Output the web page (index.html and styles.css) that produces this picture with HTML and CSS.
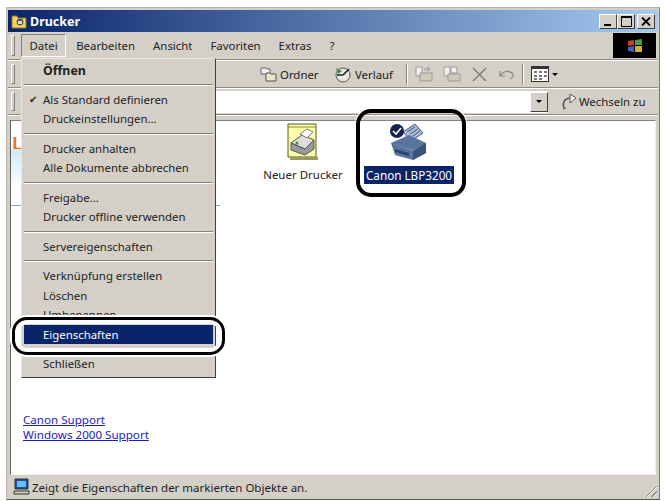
FILE: index.html
```html
<!DOCTYPE html>
<html lang="de">
<head>
  <meta charset="UTF-8" />
  <title>Drucker</title>
  <link rel="stylesheet" href="styles.css">
</head>
<body>

<div class="window">
  <!-- Title bar -->
  <div class="titlebar">
    <svg class="title-icon" width="16" height="16" viewBox="0 0 16 16">
      <path d="M1 3h5l1 2h8v10H1z" fill="#f4d35e" stroke="#8a7420"/>
      <circle cx="9" cy="9" r="3.4" fill="#555"/>
      <path d="M7 8h4v3H7z" fill="#ddd"/>
    </svg>
    <span class="title-text">Drucker</span>
    <div class="win-buttons">
      <button class="win-btn"><span class="glyph-min"></span></button>
      <button class="win-btn"><span class="glyph-max"></span></button>
      <button class="win-btn close">
        <svg width="10" height="9" viewBox="0 0 10 9"><path d="M1 0.5l8 8M9 0.5l-8 8" stroke="#000" stroke-width="1.8"/></svg>
      </button>
    </div>
  </div>

  <!-- Menu bar -->
  <div class="bar menubar">
    <div class="grip"></div>
    <div class="menu-items">
      <span class="menu-item open">Datei</span>
      <span class="menu-item">Bearbeiten</span>
      <span class="menu-item">Ansicht</span>
      <span class="menu-item">Favoriten</span>
      <span class="menu-item">Extras</span>
      <span class="menu-item">?</span>
    </div>
    <div class="throbber">
      <svg width="18" height="16" viewBox="0 0 18 16">
        <path d="M2 3l6-1v5l-6 1z" fill="#c8402c"/>
        <path d="M9 2l7-1v6l-7 0z" fill="#4f9a3c"/>
        <path d="M2 9l6-1v6l-6-1z" fill="#3a66b8"/>
        <path d="M9 8h7v6l-7 0z" fill="#d8b030"/>
      </svg>
    </div>
  </div>

  <!-- Toolbar -->
  <div class="bar toolbar">
    <div class="grip"></div>
    <span class="tool search">Suchen</span>
    <span class="tool folders">
      <svg width="17" height="16" viewBox="0 0 17 16">
        <path d="M1 2h5l1 1h3v5H1z" fill="#eee" stroke="#666"/>
        <path d="M6 7h4l1 1h5v7H6z" fill="#e8e4c8" stroke="#555"/>
      </svg>
      Ordner
    </span>
    <span class="tool history">
      <svg width="18" height="17" viewBox="0 0 18 17">
        <circle cx="9" cy="9" r="7" fill="#e6e6e6" stroke="#555"/>
        <path d="M9 9l6-6M9 9H3" stroke="#222" stroke-width="1.6"/>
        <path d="M2 2l6 3-4 3z" fill="#3f8f3a"/>
      </svg>
      Verlauf
    </span>
    <span class="tool-sep first"></span>
    <svg class="tool-icon" width="18" height="17" viewBox="0 0 18 17">
      <path d="M1 1h6v9H1z" fill="#eee" stroke="#999"/>
      <path d="M5 7h12v8H5z" fill="#cfcbb8" stroke="#999"/>
      <path d="M9 3h5M12 1l3 2-3 2" fill="none" stroke="#999"/>
    </svg>
    <svg class="tool-icon" width="18" height="17" viewBox="0 0 18 17">
      <path d="M1 1h6v9H1z" fill="#eee" stroke="#999"/>
      <path d="M8 1h6v6H8z" fill="#eee" stroke="#999"/>
      <path d="M5 8h12v7H5z" fill="#cfcbb8" stroke="#999"/>
    </svg>
    <svg class="tool-icon" width="17" height="17" viewBox="0 0 17 17">
      <path d="M2 2l13 13M15 2L2 15" stroke="#777" stroke-width="1.3"/>
    </svg>
    <svg class="tool-icon last" width="17" height="17" viewBox="0 0 17 17">
      <path d="M2 5v5h5M2 10c3-5 8-6 12-3 2 2 1 5-2 6" fill="none" stroke="#888" stroke-width="1.2"/>
    </svg>
    <span class="tool-sep second"></span>
    <svg class="tool-icon views" width="18" height="16" viewBox="0 0 18 16">
      <rect x="0.5" y="0.5" width="17" height="15" fill="#fff" stroke="#333"/>
      <path d="M0 0h18v3H0z" fill="#333"/>
      <path d="M3 5h3v2H3zM8 5h3v2H8zM13 5h3v2h-3zM3 9h3v2H3zM8 9h3v2H8zM13 9h3v2h-3zM3 12h3v2H3zM8 12h3v2H8z" fill="#777"/>
    </svg>
    <span class="tool-arrow"></span>
  </div>

  <!-- Address bar -->
  <div class="bar addressbar">
    <div class="grip"></div>
    <div class="address-field">
      <button class="combo-btn"><span class="tool-arrow"></span></button>
    </div>
    <span class="go">
      <svg width="17" height="17" viewBox="0 0 17 17">
        <path d="M3 15c-2-6 1-10 7-10" fill="none" stroke="#555" stroke-width="1.6"/>
        <path d="M9 1l6 4-6 5z" fill="#fff" stroke="#555"/>
        <path d="M2 16l3-1" stroke="#555"/>
      </svg>
      Wechseln zu
    </span>
  </div>

  <!-- Content -->
  <div class="content">
    <div class="side">
      <div class="side-head">
        <span class="side-letter">L</span>
        <div class="cloud"></div>
        <div class="side-line"></div>
      </div>
      <div class="links">
        <a href="#">Canon Support</a>
        <a href="#">Windows 2000 Support</a>
      </div>
    </div>
    <div class="files">
      <div class="file new-printer">
        <svg width="34" height="38" viewBox="0 0 34 38">
          <path d="M2 1h28v33H2z" fill="#ffffa8" stroke="#55552a"/>
          <path d="M4 34h28v3H4z" fill="#9a9a60"/>
          <path d="M2 4h28" stroke="#88883a"/>
          <path d="M5 20l11-8 12 5-9 9z" fill="#ddd" stroke="#555"/>
          <path d="M5 20v7l14 5 9-6v-9l-9 9z" fill="#999" stroke="#555"/>
          <path d="M14 11l7-5 6 3-6 6z" fill="#fff" stroke="#777"/>
          <circle cx="11" cy="20" r="1.5" fill="#3f8f3a"/>
        </svg>
        <span class="file-name">Neuer Drucker</span>
      </div>
      <div class="file canon">
        <svg width="40" height="38" viewBox="0 0 40 38">
          <path d="M14 9l12-8 8 9-12 8z" fill="#a9bcd6" stroke="#42587c"/>
          <path d="M18 9l8-5M21 11l8-5M24 13l7-5" stroke="#42587c"/>
          <path d="M2 20l18-8 17 8v10l-13 7-18-5z" fill="#58739e"/>
          <path d="M2 20l22 7 13-7-13 8z" fill="#84a0c4"/>
          <path d="M24 28v9l13-7V20z" fill="#3b527a"/>
          <path d="M6 26l14 4v3L6 29z" fill="#2f4468"/>
          <circle cx="8" cy="8" r="7" fill="#13244e"/>
          <path d="M4 8l3 3 5-6" fill="none" stroke="#fff" stroke-width="1.6"/>
        </svg>
        <span class="file-name selected">Canon LBP3200</span>
      </div>
    </div>
  </div>

  <!-- Status bar -->
  <div class="statusbar">
    <svg width="18" height="18" viewBox="0 0 18 18">
      <path d="M2 1h13v10H2z" fill="#2a4c9c" stroke="#333"/>
      <path d="M4 3h9v6H4z" fill="#5cc4f0"/>
      <path d="M1 13h15v3H1z" fill="#cfcfc0" stroke="#333"/>
    </svg>
    <span>Zeigt die Eigenschaften der markierten Objekte an.</span>
    <div class="resize-grip"></div>
  </div>
</div>

<!-- File menu -->
<div class="menu">
  <div class="row bold">Öffnen</div>
  <div class="sep top"></div>
  <div class="row checked">Als Standard definieren</div>
  <div class="row">Druckeinstellungen...</div>
  <div class="sep"></div>
  <div class="row">Drucker anhalten</div>
  <div class="row">Alle Dokumente abbrechen</div>
  <div class="sep"></div>
  <div class="row">Freigabe...</div>
  <div class="row">Drucker offline verwenden</div>
  <div class="sep"></div>
  <div class="row">Servereigenschaften</div>
  <div class="sep"></div>
  <div class="row">Verknüpfung erstellen</div>
  <div class="row">Löschen</div>
  <div class="row">Umbenennen</div>
  <div class="row active">Eigenschaften</div>
  <div class="sep"></div>
  <div class="row">Schließen</div>
</div>

<!-- Callouts -->
<div class="callout callout-menu"></div>
<div class="callout callout-printer"></div>

</body>
</html>
```

FILE: styles.css
```css
html, body {
  margin: 0;
  padding: 0;
  background: #fff;
  font-family: "Noto Sans", sans-serif;
  font-size: 11px;
  color: #222;
}

body {
  width: 665px;
  height: 501px;
  position: relative;
  overflow: hidden;
}

.window {
  position: absolute;
  left: 6px;
  top: 7px;
  width: 650px;
  height: 489px;
  background: #d4d0c8;
  border: 1px solid #b5b2aa;
  border-right-color: #777;
  border-bottom-color: #555;
  padding: 2px 1px 0;
  box-sizing: content-box;
  display: flex;
  flex-direction: column;
}

.titlebar {
  height: 22px;
  flex: none;
  display: flex;
  align-items: center;
  padding-left: 3px;
  background: linear-gradient(to right, #0a246a, #a6caf0);
  color: #fff;
  font-weight: bold;
  font-size: 12.5px;
}

.title-icon {
  margin-right: 3px;
}

.win-buttons {
  margin-left: auto;
  margin-right: 3px;
  display: flex;
}

.win-btn {
  width: 18px;
  height: 15px;
  padding: 0;
  background: #d4d0c8;
  border: 1px solid;
  border-color: #fff #404040 #404040 #fff;
  display: flex;
  align-items: center;
  justify-content: center;
}

.win-btn.close {
  margin-left: 2px;
}

.glyph-min {
  width: 7px;
  height: 2px;
  background: #000;
  margin-top: 7px;
  margin-right: 2px;
}

.glyph-max {
  width: 9px;
  height: 8px;
  border: 1px solid #000;
  border-top-width: 2px;
}

.bar {
  flex: none;
  display: flex;
  align-items: center;
  border-bottom: 1px solid #8f8c85;
  box-shadow: 0 1px 0 #fff;
  margin-bottom: 1px;
  position: relative;
}

.grip {
  position: absolute;
  left: 3px;
  top: 3px;
  bottom: 3px;
  width: 2px;
  border: 1px solid;
  border-color: #fff #808080 #808080 #fff;
}

.menubar {
  height: 27px;
}

.menu-items {
  display: flex;
  align-items: center;
  padding-left: 13px;
  font-size: 11.4px;
}

.menu-item {
  padding: 0 9px;
  line-height: 21px;
}

.menu-item.open {
  padding: 0 7.5px;
  border: 1px solid;
  border-color: #808080 #fff #fff #808080;
  margin-right: 1px;
}

.throbber {
  margin-left: auto;
  margin-right: 2px;
  width: 43px;
  height: 25px;
  background: #000;
  display: flex;
  align-items: center;
  justify-content: center;
}

.toolbar {
  height: 26px;
  font-size: 11.4px;
}

.tool {
  display: flex;
  align-items: center;
  gap: 3px;
}

.tool.search {
  margin-left: 162px;
  width: 90px;
}

.tool.folders {
  width: 74px;
}

.tool-sep {
  width: 0;
  height: 21px;
  border-left: 1px solid #808080;
  border-right: 1px solid #fff;
}

.tool-sep.first {
  margin-left: 13px;
  margin-right: 7px;
}

.tool-sep.second {
  margin-right: 7px;
}

.tool-icon {
  margin-right: 10px;
}

.tool-icon.last {
  margin-right: 7px;
}

.tool-icon.views {
  margin-right: 3px;
}

.tool-arrow {
  width: 0;
  height: 0;
  border-left: 3px solid transparent;
  border-right: 3px solid transparent;
  border-top: 3px solid #000;
}

.addressbar {
  height: 25px;
  font-size: 11.4px;
  margin-bottom: 5px;
}

.address-field {
  margin-left: 60px;
  width: 480px;
  height: 22px;
  background: #fff;
  display: flex;
  justify-content: flex-end;
  align-items: center;
}

.combo-btn {
  width: 18px;
  height: 20px;
  padding: 0;
  background: #d4d0c8;
  border: 1px solid;
  border-color: #fff #404040 #404040 #fff;
  display: flex;
  align-items: center;
  justify-content: center;
}

.go {
  margin-left: 13px;
  display: flex;
  align-items: center;
  gap: 1px;
}

.content {
  flex: 1;
  min-height: 0;
  margin: 0 2px;
  background: #fff;
  border: 1px solid;
  border-color: #808080 #f0f0f0 #f0f0f0 #606060;
  display: flex;
}

.side {
  width: 209px;
  flex: none;
  display: flex;
  flex-direction: column;
  justify-content: space-between;
}

.side-head {
  height: 85px;
  position: relative;
}

.side-letter {
  position: absolute;
  left: 1px;
  top: 12px;
  color: #e8761c;
  font-weight: bold;
  font-size: 18px;
  line-height: 20px;
}

.cloud {
  position: absolute;
  left: 0;
  top: 28px;
  width: 12px;
  height: 40px;
  background: linear-gradient(to bottom, #cfeafa, #fff);
}

.side-line {
  position: absolute;
  left: 0;
  right: 0;
  bottom: 0;
  height: 1px;
  background: #7fa6cc;
}

.links {
  display: flex;
  flex-direction: column;
  padding: 0 0 32px 12px;
  font-size: 11.6px;
  line-height: 15px;
}

.links a {
  color: #1a1ac8;
}

.files {
  display: flex;
  align-items: flex-start;
  padding: 2px 0 0 38px;
  gap: 16px;
}

.file {
  display: flex;
  flex-direction: column;
  align-items: center;
  width: 90px;
  font-size: 11.5px;
}

.file.canon {
  font-size: 11.7px;
}

.file svg {
  margin-bottom: 5px;
}

.file-name {
  padding: 1px 2px;
  white-space: nowrap;
}

.file-name.selected {
  background: #0a246a;
  color: #fff;
}

.statusbar {
  height: 24px;
  flex: none;
  display: flex;
  align-items: center;
  gap: 1px;
  padding-left: 5px;
  font-size: 11.5px;
  position: relative;
}

.resize-grip {
  position: absolute;
  right: 1px;
  bottom: 2px;
  width: 13px;
  height: 13px;
  background: repeating-linear-gradient(135deg, transparent 0 2px, #888 2px 3px, #fff 3px 4px);
  clip-path: polygon(100% 0, 100% 100%, 0 100%);
}

/* File menu */
.menu {
  position: absolute;
  left: 21px;
  top: 58px;
  width: 193px;
  padding: 2px 0 3px;
  background: #d4d0c8;
  border: 1px solid;
  border-color: #e8e6e0 #404040 #404040 #e8e6e0;
  box-sizing: content-box;
  font-size: 11.4px;
}

.row {
  height: 19.5px;
  line-height: 19.5px;
  padding-left: 21px;
  position: relative;
  white-space: nowrap;
}

.row.bold {
  font-weight: bold;
  font-size: 12.4px;
}

.row.checked::before {
  content: "✔";
  position: absolute;
  left: 7px;
  font-size: 10px;
}

.row.active {
  background: #0a246a;
  color: #fff;
  margin: 0 2px;
  padding-left: 19px;
}

.sep {
  height: 0;
  margin: 4px 2px;
  border-top: 1px solid #808080;
  border-bottom: 1px solid #fff;
}

.sep.top {
  margin-top: 3px;
}

/* Callouts */
.callout {
  position: absolute;
  border: 3px solid #000;
  border-radius: 15px;
  box-sizing: border-box;
}

.callout-menu {
  left: 12px;
  top: 317px;
  width: 213px;
  height: 38px;
  box-shadow: 0 0 0 2px #fff, inset 0 0 0 4px #fff;
}

.callout-printer {
  left: 356px;
  top: 109px;
  width: 110px;
  height: 88px;
  border-width: 4px;
  box-shadow: 0 0 0 1px #fff;
}
```
